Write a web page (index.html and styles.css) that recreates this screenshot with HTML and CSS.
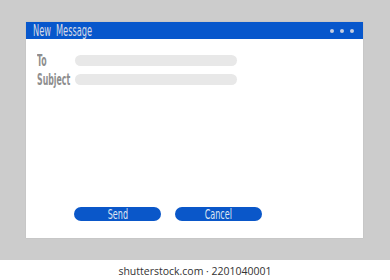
FILE: index.html
```html
<!DOCTYPE html>
<html lang="en">

<head>
    <meta charset="UTF-8">
    <meta name="viewport" content="width=device-width, initial-scale=1.0">
    <title>New Message</title>
    <link rel="stylesheet" href="styles.css">
</head>

<body>
    <div class="stage">
        <div class="window">
            <div class="title-bar">
                <span class="title">New Message</span>
                <div class="dots">
                    <span class="dot"></span>
                    <span class="dot"></span>
                    <span class="dot"></span>
                </div>
            </div>
            <div class="window-body">
                <div class="fields">
                    <div class="field-row">
                        <span class="label">To</span>
                        <span class="field"></span>
                    </div>
                    <div class="field-row">
                        <span class="label">Subject</span>
                        <span class="field"></span>
                    </div>
                </div>
                <div class="actions">
                    <button class="btn"><span class="btn-text">Send</span></button>
                    <button class="btn"><span class="btn-text">Cancel</span></button>
                </div>
            </div>
        </div>
    </div>
    <div class="credit">shutterstock.com · 2201040001</div>
</body>

</html>
```

FILE: styles.css
```css
body {
    margin: 0;
    background-color: #ffffff;
    font-family: 'DejaVu Sans Condensed', 'DejaVu Sans', sans-serif;
}

.stage {
    background-color: #cccccc;
    height: 260px;
    box-sizing: border-box;
    padding: 22px 27px 22px 26px;
}

.window {
    background-color: #ffffff;
    height: 216px;
    display: flex;
    flex-direction: column;
    box-shadow: 0 0 1px rgba(0, 0, 0, 0.15);
}

.title-bar {
    background-color: #0757cc;
    height: 17px;
    display: flex;
    align-items: center;
    justify-content: space-between;
    padding: 0 7px 0 7px;
}

.title {
    display: inline-block;
    color: #d6dbe6;
    font-size: 15px;
    word-spacing: 4px;
    transform: scaleX(0.61);
    transform-origin: left center;
}

.dots {
    display: flex;
    gap: 6px;
    padding-right: 2px;
}

.dot {
    width: 4px;
    height: 4px;
    border-radius: 50%;
    background-color: #c4cde0;
}

.window-body {
    flex: 1;
    display: flex;
    flex-direction: column;
    justify-content: space-between;
    padding: 16px 0 17px 11px;
}

.fields {
    display: flex;
    flex-direction: column;
    gap: 8px;
}

.field-row {
    display: flex;
    align-items: center;
    height: 11px;
}

.label {
    display: inline-block;
    width: 38px;
    color: #8e8e8e;
    font-size: 15px;
    font-weight: bold;
    transform: scaleX(0.58);
    transform-origin: left center;
}

.field {
    width: 162px;
    height: 11px;
    border-radius: 6px;
    background-color: #e8e8e8;
}

.actions {
    display: flex;
    gap: 14px;
    padding-left: 37px;
}

.btn {
    width: 87px;
    height: 14px;
    padding: 0;
    border: none;
    border-radius: 7px;
    background-color: #0a57c9;
    color: #dfe6f2;
    font-family: inherit;
    font-size: 14px;
    line-height: 14px;
}

.btn-text {
    display: inline-block;
    transform: scaleX(0.64);
}

.credit {
    height: 20px;
    line-height: 22px;
    text-align: center;
    font-family: 'Open Sans', sans-serif;
    font-size: 10.5px;
    color: #333333;
}
```
